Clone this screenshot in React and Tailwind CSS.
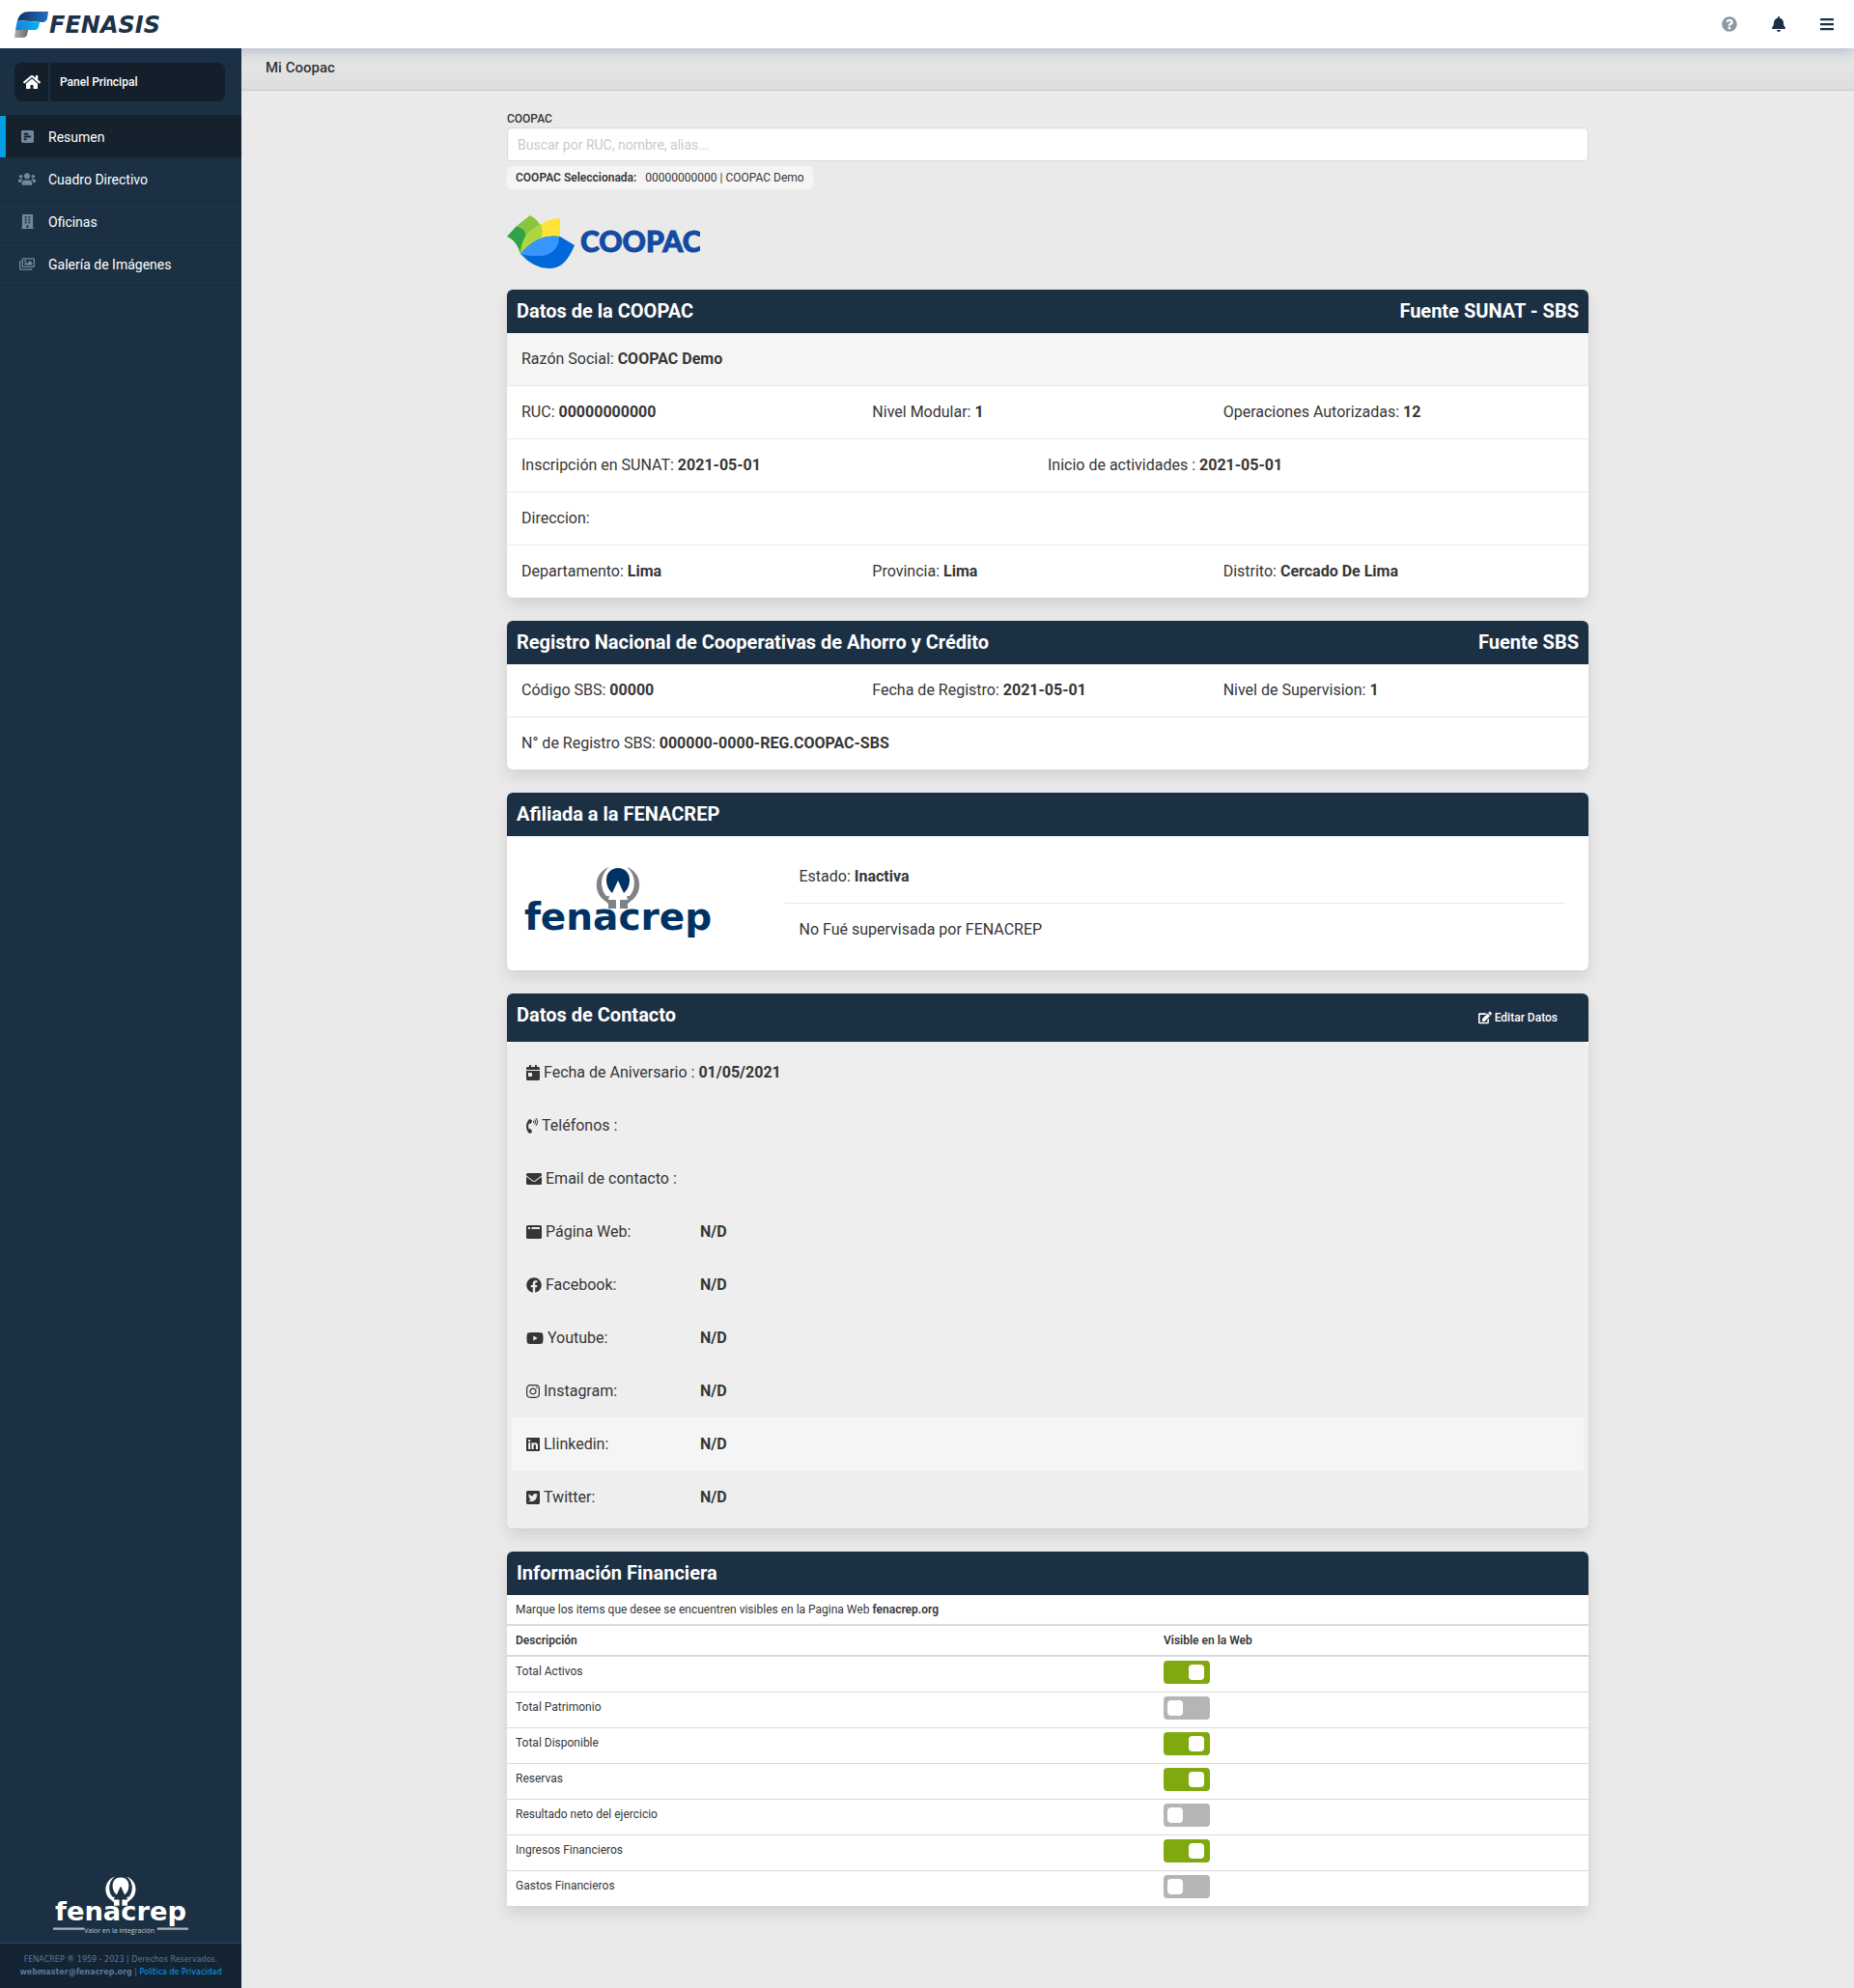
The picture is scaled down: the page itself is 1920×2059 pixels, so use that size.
import {
  FaHome, FaUsers, FaBuilding, FaRegImages, FaQuestionCircle, FaBell, FaBars, FaCalendarDay,
  FaPhoneVolume, FaEnvelope, FaFacebook, FaYoutube, FaInstagram, FaLinkedin, FaTwitterSquare,
  FaEdit, FaPollH,
} from "react-icons/fa";

function FenasisLogo() {
  return (
    <svg width="160" height="30" viewBox="0 0 160 30" role="img" aria-label="FENASIS">
      <defs>
        <linearGradient id="wing-top" x1="0" x2="1">
          <stop offset="0" stopColor="#0f3362" />
          <stop offset="1" stopColor="#236fbe" />
        </linearGradient>
        <linearGradient id="wing-mid" x1="0" x2="1">
          <stop offset="0" stopColor="#1b7fd6" />
          <stop offset="1" stopColor="#06b4f2" />
        </linearGradient>
        <linearGradient id="wing-low" x1="0" x2="1">
          <stop offset="0" stopColor="#adadad" />
          <stop offset="1" stopColor="#686868" />
        </linearGradient>
      </defs>
      <path d="M3 11C5 5 9 2 15 2H35L34 9Q33 13 29 13L3 11Z" fill="url(#wing-top)" />
      <path d="M3 11L26 13L25 18Q24 21 21 21H1Z" fill="url(#wing-mid)" />
      <path d="M1 21H14L13 26Q12 29 9 29H0Z" fill="url(#wing-low)" />
      <text x="36" y="24" fill="#1c3248" fontFamily="'DejaVu Sans', sans-serif" fontWeight="700" fontStyle="italic" fontSize="24">FENASIS</text>
    </svg>
  );
}

function CoopacLogo() {
  return (
    <svg width="200" height="56" viewBox="0 0 200 56" role="img" aria-label="COOPAC">
      <path d="M0 22L10 11Q19 13 20 21L14 40Q10 26 0 22Z" fill="#2fa345" />
      <path d="M10 11L24 0Q34 5 36 16L20 24Q19 12 10 11Z" fill="#89c540" />
      <path d="M34 10Q42 4 55 3V22L36 24Z" fill="#ffe436" />
      <path d="M14 40C14 25 22 15 35 9Q40 22 30 30Z" fill="#aed643" />
      <path d="M14 40Q32 18 55 22L70 31C62 50 54 55 43 55Q28 55 14 40Z" fill="#0068d9" />
      <path d="M14 40Q32 18 54 22C54 36 44 43 30 42Q20 42 14 40Z" fill="#3797ff" />
      <text x="76" y="38" fill="#134ba3" stroke="#134ba3" strokeWidth="1" fontFamily="Lato, sans-serif" fontWeight="900" fontSize="30">COOPAC</text>
    </svg>
  );
}

function FenacrepLogo({ light }) {
  const ink = light ? "#ffffff" : "#003263";
  const hands = light ? "#ffffff" : "#808285";
  return (
    <svg
      width={light ? 140 : 200}
      height={light ? 63 : 78}
      viewBox={light ? "0 0 200 90" : "0 0 200 78"}
      role="img"
      aria-label="fenacrep"
    >
      <g transform="translate(78 1)">
        <path d="M22 1C29 1 34 6 34 13C34 19 32 23 28 27L22 14L16 27C12 23 10 19 10 13C10 6 15 1 22 1Z" fill={ink} />
        <path d="M13 0C-2 5-4 24 6 33L12 38V43H20V34H12L13 30L10 30C3 22 3 8 13 0Z" fill={hands} />
        <path d="M31 0C46 5 48 24 38 33L32 38V43H24V34H32L31 30L34 30C41 22 41 8 31 0Z" fill={hands} />
      </g>
      <text x="100" y="66" textAnchor="middle" fill={ink} fontFamily="'DejaVu Sans', sans-serif" fontWeight="700" fontSize="39">fenacrep</text>
      {light && (
        <g>
          <path d="M0 78H46M154 78H200" stroke="#aab4be" strokeWidth="3" />
          <text x="98" y="84" textAnchor="middle" fill="#c3cad1" fontFamily="'Open Sans', sans-serif" fontSize="10">Valor en la integración</text>
        </g>
      )}
    </svg>
  );
}

function WindowIcon({ className }) {
  return (
    <svg viewBox="0 0 512 512" fill="currentColor" className={className} aria-hidden="true">
      <path fillRule="evenodd" d="M48 32H464Q512 32 512 80V432Q512 480 464 480H48Q0 480 0 432V80Q0 32 48 32ZM64 96V160H128V96ZM176 96V160H448V96Z" />
    </svg>
  );
}

const MENU = [
  { label: "Resumen", Icon: FaPollH, size: "w-[13px]", active: true },
  { label: "Cuadro Directivo", Icon: FaUsers, size: "w-[18px]" },
  { label: "Oficinas", Icon: FaBuilding, size: "w-[13px]" },
  { label: "Galería de Imágenes", Icon: FaRegImages, size: "w-4" },
];

const CONTACT = [
  { Icon: FaCalendarDay, size: "w-3.5", label: "Fecha de Aniversario :", inline: "01/05/2021" },
  { Icon: FaPhoneVolume, size: "w-3", label: "Teléfonos :" },
  { Icon: FaEnvelope, size: "w-4", label: "Email de contacto :" },
  { Icon: WindowIcon, size: "w-4", label: "Página Web:", value: "N/D" },
  { Icon: FaFacebook, size: "w-4", label: "Facebook:", value: "N/D" },
  { Icon: FaYoutube, size: "w-[18px]", label: "Youtube:", value: "N/D" },
  { Icon: FaInstagram, size: "w-3.5", label: "Instagram:", value: "N/D" },
  { Icon: FaLinkedin, size: "w-3.5", label: "Llinkedin:", value: "N/D", hover: true },
  { Icon: FaTwitterSquare, size: "w-3.5", label: "Twitter:", value: "N/D" },
];

const FINANCE = [
  ["Total Activos", true],
  ["Total Patrimonio", false],
  ["Total Disponible", true],
  ["Reservas", true],
  ["Resultado neto del ejercicio", false],
  ["Ingresos Financieros", true],
  ["Gastos Financieros", false],
];

function Card({ title, aside, tall, square, children }) {
  return (
    <section className={`mb-6 bg-white shadow-[0_8px_16px_rgba(10,10,10,0.1),0_0_0_1px_rgba(10,10,10,0.02)] ${square ? "rounded-t-md" : "rounded-md"}`}>
      <header className={`flex items-start justify-between rounded-t-md bg-[#1c3044] px-2.5 pt-2 text-xl leading-7 font-bold text-white ${tall ? "h-[50px]" : "h-[45px]"}`}>
        <h2>{title}</h2>
        {aside}
      </header>
      {children}
    </section>
  );
}

function Field({ label, value }) {
  return (
    <p>
      {label} {value && <strong className="font-bold">{value}</strong>}
    </p>
  );
}

const COLS = { 1: "grid-cols-1", 2: "grid-cols-2", 3: "grid-cols-3" };

function Row({ fields, shaded }) {
  return (
    <div className={`grid h-[55px] items-center border-b border-[#e8e8e8] px-[15px] text-base last:h-[54px] last:border-b-0 ${COLS[fields.length]} ${shaded ? "bg-[#f5f5f5]" : ""}`}>
      {fields.map(([label, value]) => (
        <Field key={label} label={label} value={value} />
      ))}
    </div>
  );
}

export default function App() {
  return (
    <div className="flex min-h-screen flex-col bg-[#eaeaea] font-[Roboto,sans-serif] text-[#363636]">
      <nav className="relative z-10 flex h-[50px] items-center justify-between bg-white pr-[21px] pl-[15px] shadow-[0_4px_12px_rgba(28,60,110,0.25)]">
        <a href="#inicio"><FenasisLogo /></a>
        <div className="flex items-center gap-9 text-[#1a3045]">
          <button type="button" aria-label="Ayuda" className="text-[#8b98a6]"><FaQuestionCircle className="h-4 w-4" /></button>
          <button type="button" aria-label="Notificaciones"><FaBell className="h-4 w-3.5" /></button>
          <button type="button" aria-label="Menú"><FaBars className="h-4 w-3.5" /></button>
        </div>
      </nav>

      <div className="flex grow">
        <aside className="flex w-[250px] shrink-0 flex-col bg-[#1c3044] text-white">
          <a href="#panel" className="mt-[15px] mr-[17px] mb-3.5 ml-[15px] flex h-10 items-stretch overflow-hidden rounded-lg bg-[#131f2a] text-xs font-medium">
            <span className="flex w-[37px] items-center justify-center border-r-2 border-[#1c3044]"><FaHome className="h-4 w-[18px]" /></span>
            <span className="flex items-center pl-2.5">Panel Principal</span>
          </a>
          <ul className="border-t border-[#15232f]">
            {MENU.map(({ label, Icon, size, active }) => (
              <li key={label} className="border-b border-[#182938]">
                <a href="#menu" className={`flex h-[43px] items-center border-l-6 text-sm ${active ? "border-[#039ee3] bg-[#15212c]" : "border-transparent"}`}>
                  <span className="flex w-11 justify-center text-[#71879a]"><Icon className={`h-[15px] ${size}`} /></span>
                  {label}
                </a>
              </li>
            ))}
          </ul>
          <div className="mt-auto">
            <div className="flex justify-center pb-1.5"><FenacrepLogo light /></div>
            <footer className="border-t border-[#24476a] bg-[#152432] pt-2.5 pb-2.5 text-center font-['DejaVu_Sans',sans-serif] text-[8px] leading-[13px] text-[#55789a]">
              <p>FENACREP ® 1959 - 2023 | Derechos Reservados.</p>
              <p><strong>webmaster@fenacrep.org</strong> | <a href="#privacidad" className="text-[#0e9bf0]">Política de Privacidad</a></p>
            </footer>
          </div>
        </aside>

        <main className="min-w-0 grow">
          <div className="flex h-11 items-center border-b border-[#c9c9c9] bg-linear-to-b from-[#eaeaea] to-[#dddddd] pb-0.5 pl-[25px] text-[15px] font-medium">
            <h1>Mi Coopac</h1>
          </div>

          <div className="mx-auto max-w-[1120px] pt-5">
            <label htmlFor="coopac" className="block text-xs leading-[18px] font-medium">COOPAC</label>
            <input id="coopac" type="text" placeholder="Buscar por RUC, nombre, alias..." className="block h-[35px] w-full rounded border border-[#dbdbdb] bg-white px-2.5 text-sm shadow-[inset_0_1px_2px_rgba(10,10,10,0.05)] placeholder:text-[#cacaca]" />
            <p className="mt-[5px] inline-flex h-6 items-center gap-[9px] rounded bg-[#f5f5f5] px-[9px] text-xs">
              <strong className="font-semibold">COOPAC Seleccionada:</strong>
              <span>00000000000 | COOPAC Demo</span>
            </p>
            <div className="mt-[27px] mb-[21px]"><CoopacLogo /></div>

            <Card title="Datos de la COOPAC" aside={<span>Fuente SUNAT - SBS</span>}>
              <Row shaded fields={[["Razón Social:", "COOPAC Demo"]]} />
              <Row fields={[["RUC:", "00000000000"], ["Nivel Modular:", "1"], ["Operaciones Autorizadas:", "12"]]} />
              <Row fields={[["Inscripción en SUNAT:", "2021-05-01"], ["Inicio de actividades :", "2021-05-01"]]} />
              <Row fields={[["Direccion:", ""]]} />
              <Row fields={[["Departamento:", "Lima"], ["Provincia:", "Lima"], ["Distrito:", "Cercado De Lima"]]} />
            </Card>

            <Card title="Registro Nacional de Cooperativas de Ahorro y Crédito" aside={<span>Fuente SBS</span>}>
              <Row fields={[["Código SBS:", "00000"], ["Fecha de Registro:", "2021-05-01"], ["Nivel de Supervision:", "1"]]} />
              <Row fields={[["N° de Registro SBS:", "000000-0000-REG.COOPAC-SBS"]]} />
            </Card>

            <Card title="Afiliada a la FENACREP">
              <div className="flex p-[15px]">
                <div className="w-1/4 pt-4"><FenacrepLogo /></div>
                <div className="w-3/4 pr-[9px]">
                  <Row fields={[["Estado:", "Inactiva"]]} />
                  <Row fields={[["No Fué supervisada por FENACREP", ""]]} />
                </div>
              </div>
            </Card>

            <Card
              tall
              title="Datos de Contacto"
              aside={
                <button type="button" className="mt-[9px] mr-[22px] flex items-center gap-[3px] text-xs font-medium">
                  <FaEdit className="size-3.5" />Editar Datos
                </button>
              }
            >
              <div className="rounded-md bg-[#eeeeee] px-[5px] pt-1 pb-[5px]">
                {CONTACT.map(({ Icon, size, label, value, inline, hover }) => (
                  <div key={label} className={`flex h-[55px] items-center px-[15px] text-base ${hover ? "bg-[#f5f5f5]" : ""}`}>
                    <div className="flex min-w-[180px] items-center gap-1">
                      <Icon className={`h-4 ${size}`} />
                      <Field label={label} value={inline} />
                    </div>
                    {value && <strong className="font-bold">{value}</strong>}
                  </div>
                ))}
              </div>
            </Card>

            <Card square title="Información Financiera">
              <p className="px-[9px] py-1.5 text-xs leading-[18px]">
                Marque los items que desee se encuentren visibles en la Pagina Web <strong className="font-semibold">fenacrep.org</strong>
              </p>
              <table className="w-full table-fixed border-separate border-spacing-0 text-left text-xs leading-[18px]">
                <thead>
                  <tr>
                    <th className="w-3/5 border-y-2 border-[#dbdbdb] px-[9px] py-1.5 font-semibold">Descripción</th>
                    <th className="border-y-2 border-[#dbdbdb] px-2 py-1.5 font-semibold">Visible en la Web</th>
                  </tr>
                </thead>
                <tbody>
                  {FINANCE.map(([name, on], i) => (
                    <tr key={name} className="group align-top">
                      <td className="border-b border-[#dbdbdb] px-[9px] py-1.5 group-last:border-b-0">
                        <label htmlFor={`item-${i}`}>{name}</label>
                      </td>
                      <td className="border-b border-[#dbdbdb] px-2 pt-1 pb-2 group-last:border-b-0">
                        <input
                          id={`item-${i}`}
                          type="checkbox"
                          defaultChecked={on}
                          className="block h-6 w-12 appearance-none rounded bg-[#b5b5b5] p-1 before:block before:size-4 before:rounded before:bg-white checked:bg-[#80a80f] checked:before:ml-[22px]"
                        />
                      </td>
                    </tr>
                  ))}
                </tbody>
              </table>
            </Card>
          </div>
        </main>
      </div>
    </div>
  );
}
